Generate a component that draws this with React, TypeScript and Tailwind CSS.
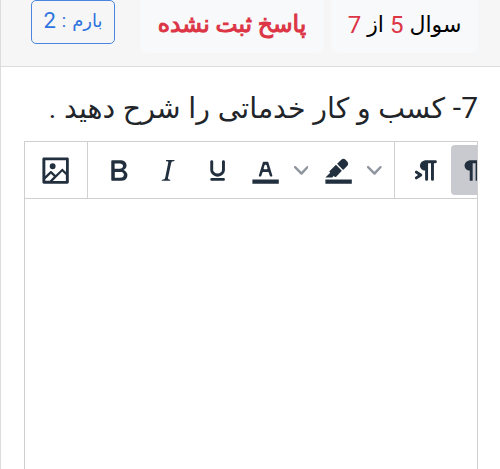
import clsx from "clsx";
import type { ReactNode } from "react";

const ICONS = {
  image:
    "m5 15.7 3.3-3.2c.3-.3.7-.3 1 0L12 15l4.1-4c.3-.4.8-.4 1 0l2 1.9V5H5v10.7ZM5 18V19h3l2.8-2.9-2-2L5 17.9Zm14-3-2.5-2.4-6.4 6.5H19v-4ZM4 3h16c.6 0 1 .4 1 1v16c0 .6-.4 1-1 1H4a1 1 0 0 1-1-1V4c0-.6.4-1 1-1Zm6 8a2 2 0 1 0 0-4 2 2 0 0 0 0 4Z",
  bold: "M7.8 19c-.3 0-.5 0-.6-.2l-.2-.5V5.7c0-.2 0-.4.2-.5l.6-.2h5c1.5 0 2.7.3 3.5 1 .7.6 1.1 1.4 1.1 2.5a3 3 0 0 1-.6 1.9c-.4.6-1 1-1.6 1.2.4.1.9.3 1.3.6s.8.7 1 1.2c.4.4.5 1 .5 1.6 0 1.3-.4 2.3-1.3 3-.8.7-2.1 1-3.8 1H7.8Zm5-8.3c.6 0 1.2-.1 1.6-.5.4-.3.6-.7.6-1.3 0-1.1-.8-1.7-2.3-1.7H9.3v3.5h3.4Zm.5 6c.7 0 1.3-.1 1.7-.4.4-.4.6-.9.6-1.5s-.2-1-.7-1.4c-.4-.3-1-.4-2-.4H9.4v3.8h4Z",
  italic:
    "m16.7 4.7-.1.9h-.3c-.6 0-1 0-1.4.3-.3.3-.4.6-.5 1.1l-2.1 9.8v.6c0 .5.4.8 1.4.8h.2l-.2.8H8l.2-.8h.2c1.1 0 1.8-.5 2-1.5l2-9.8.1-.5c0-.6-.4-.8-1.4-.8h-.3l.2-.9h5.8Z",
  underline:
    "M16 5c.6 0 1 .4 1 1v5.5a4 4 0 0 1-.4 1.8l-1 1.4a5.3 5.3 0 0 1-5.5 1 5 5 0 0 1-1.6-1c-.5-.4-.8-.9-1.1-1.4a4 4 0 0 1-.4-1.8V6c0-.6.4-1 1-1s1 .4 1 1v5.5c0 .3 0 .6.2 1l.6.7a3.3 3.3 0 0 0 2.2.8 3.4 3.4 0 0 0 2.2-.8c.3-.2.4-.5.6-.8l.2-.9V6c0-.6.4-1 1-1ZM8 17h8c.6 0 1 .4 1 1s-.4 1-1 1H8a1 1 0 0 1 0-2Z",
  textColor:
    "M3 18h18v3H3zM8.7 16h-.8a.5.5 0 0 1-.5-.6l2.7-9c.1-.3.3-.4.5-.4h2.8c.2 0 .4.1.5.4l2.7 9a.5.5 0 0 1-.5.6h-.8a.5.5 0 0 1-.4-.4l-.7-2.2c0-.3-.3-.4-.5-.4h-3.4c-.2 0-.4.1-.5.4l-.7 2.2c0 .3-.2.4-.4.4Zm2.6-7.6-.6 2a.5.5 0 0 0 .5.6h1.6a.5.5 0 0 0 .5-.6l-.6-2c0-.3-.3-.4-.5-.4h-.4c-.2 0-.4.1-.5.4Z",
  highlight:
    "M3 18h18v3H3zM7.7 16.7H3l3.3-3.3-.7-.8L10.2 8l4 4.1-4 4.2c-.2.2-.6.2-.8 0l-.6-.7-1.1 1.1zm5-7.5L11 7.4l3-2.9a2 2 0 0 1 2.6 0L18 6c.7.7.7 2 0 2.7l-2.9 2.9-1.8-1.8-.5-.6",
  ltr: "M11 5h7a1 1 0 0 1 0 2h-1v11a1 1 0 0 1-2 0V7h-2v11a1 1 0 0 1-2 0v-6c-.5 0-1 0-1.4-.3A3.4 3.4 0 0 1 7.8 10a3.3 3.3 0 0 1 0-2.8 3.4 3.4 0 0 1 1.8-1.8L11 5ZM4.4 16.2 6.2 15l-1.8-1.2a1 1 0 0 1 1.2-1.6l3 2a1 1 0 0 1 0 1.6l-3 2a1 1 0 1 1-1.2-1.6Z",
  rtl: "M8 5h8v2h-2v12h-2V7h-2v12H8v-7c-.5 0-1 0-1.4-.3A3.4 3.4 0 0 1 4.8 10a3.3 3.3 0 0 1 0-2.8 3.4 3.4 0 0 1 1.8-1.8L8 5Z",
};

function ToolButton({
  icon,
  label,
  active,
  split,
}: {
  icon: keyof typeof ICONS;
  label: string;
  active?: boolean;
  split?: boolean;
}) {
  return (
    <button
      type="button"
      aria-label={label}
      className={clsx(
        "flex h-[50px] shrink-0 items-center rounded-[4px] pt-px",
        split ? "w-[73.2px] pl-[5.5px]" : "w-[49.5px] justify-center",
        active && "bg-[#c8cacf]"
      )}
    >
      <svg viewBox="0 0 24 24" className="size-[35.2px] shrink-0 fill-[#222f3e]" fillRule="evenodd">
        <path d={ICONS[icon]} />
      </svg>
      {split && (
        <svg viewBox="0 0 10 10" className="ml-[11px] size-[14.7px] shrink-0 fill-[#8e959e]">
          <path d="M8.7 2.2c.3-.3.8-.3 1 0 .4.4.4.9 0 1.2L5.7 7.8c-.3.3-.9.3-1.2 0L.2 3.4a.8.8 0 0 1 0-1.2c.3-.3.8-.3 1.1 0L5 6l3.7-3.8Z" />
        </svg>
      )}
    </button>
  );
}

function ToolGroup({ children, last }: { children: ReactNode; last?: boolean }) {
  return (
    <div
      className={clsx(
        "flex h-full shrink-0 items-center px-[6px]",
        !last && "border-r-[1.5px] border-[#d2d2d2]"
      )}
    >
      {children}
    </div>
  );
}

export default function App() {
  return (
    <div
      dir="rtl"
      className="flex h-[469px] w-[500px] flex-col overflow-hidden border-l border-[#dcdcdc] bg-white font-[Roboto,'DejaVu_Sans',sans-serif] text-[#212529]"
    >
      {/* وضعیت سوال */}
      <header className="flex h-[67px] shrink-0 items-start border-b border-[#dcdcdc] bg-[#f6f6f6] pr-[22px]">
        <div className="flex h-[53px] w-[147px] items-center justify-center gap-[6px] rounded-b-md bg-[#f8f9fb] pb-1 text-[22px] text-black">
          <span>سوال</span>
          <span className="text-[24px] text-[#dc3545]">5</span>
          <span>از</span>
          <span className="text-[24px] text-[#dc3545]">7</span>
        </div>
        <div className="mr-[7px] flex h-[53px] w-[184px] items-center justify-center rounded-b-md bg-[#f8f9fb] pb-[3px] text-[23.4px] whitespace-nowrap text-[#dc3545] [-webkit-text-stroke:1px_#dc3545]">
          پاسخ ثبت نشده
        </div>
        <div className="mr-[25px] flex h-11 w-[84px] items-center justify-center gap-[6px] rounded-[5px] border border-[#4a86e0] pb-[3px] text-[18px] whitespace-nowrap text-[#2f74de]">
          <span>بارم</span>
          <span>:</span>
          <span className="text-[22px]">2</span>
        </div>
      </header>

      {/* متن سوال */}
      <h1 className="h-[74px] shrink-0 pt-[22px] pr-[22px] text-[28.4px] leading-[38px] [word-spacing:0.7px] whitespace-nowrap">
        <span className="text-[30px]">7-</span> کسب و کار خدماتی را شرح دهید .
      </h1>

      {/* ویرایشگر پاسخ */}
      <section
        dir="ltr"
        className="mr-[22px] flex w-[454px] grow flex-col overflow-hidden border-x-[1.5px] border-t-[1.5px] border-[#cfcfcf]"
      >
        <div className="flex h-[57px] shrink-0 items-center overflow-hidden border-b-[1.5px] border-[#cfcfcf]">
          <ToolGroup>
            <ToolButton icon="image" label="تصویر" />
          </ToolGroup>
          <ToolGroup>
            <ToolButton icon="bold" label="ضخیم" />
            <ToolButton icon="italic" label="مورب" />
            <ToolButton icon="underline" label="زیرخط" />
            <ToolButton icon="textColor" label="رنگ متن" split />
            <ToolButton icon="highlight" label="رنگ زمینه" split />
          </ToolGroup>
          <ToolGroup last>
            <ToolButton icon="ltr" label="چپ به راست" />
            <ToolButton icon="rtl" label="راست به چپ" active />
          </ToolGroup>
        </div>
        <div className="grow bg-white" />
      </section>
    </div>
  );
}
